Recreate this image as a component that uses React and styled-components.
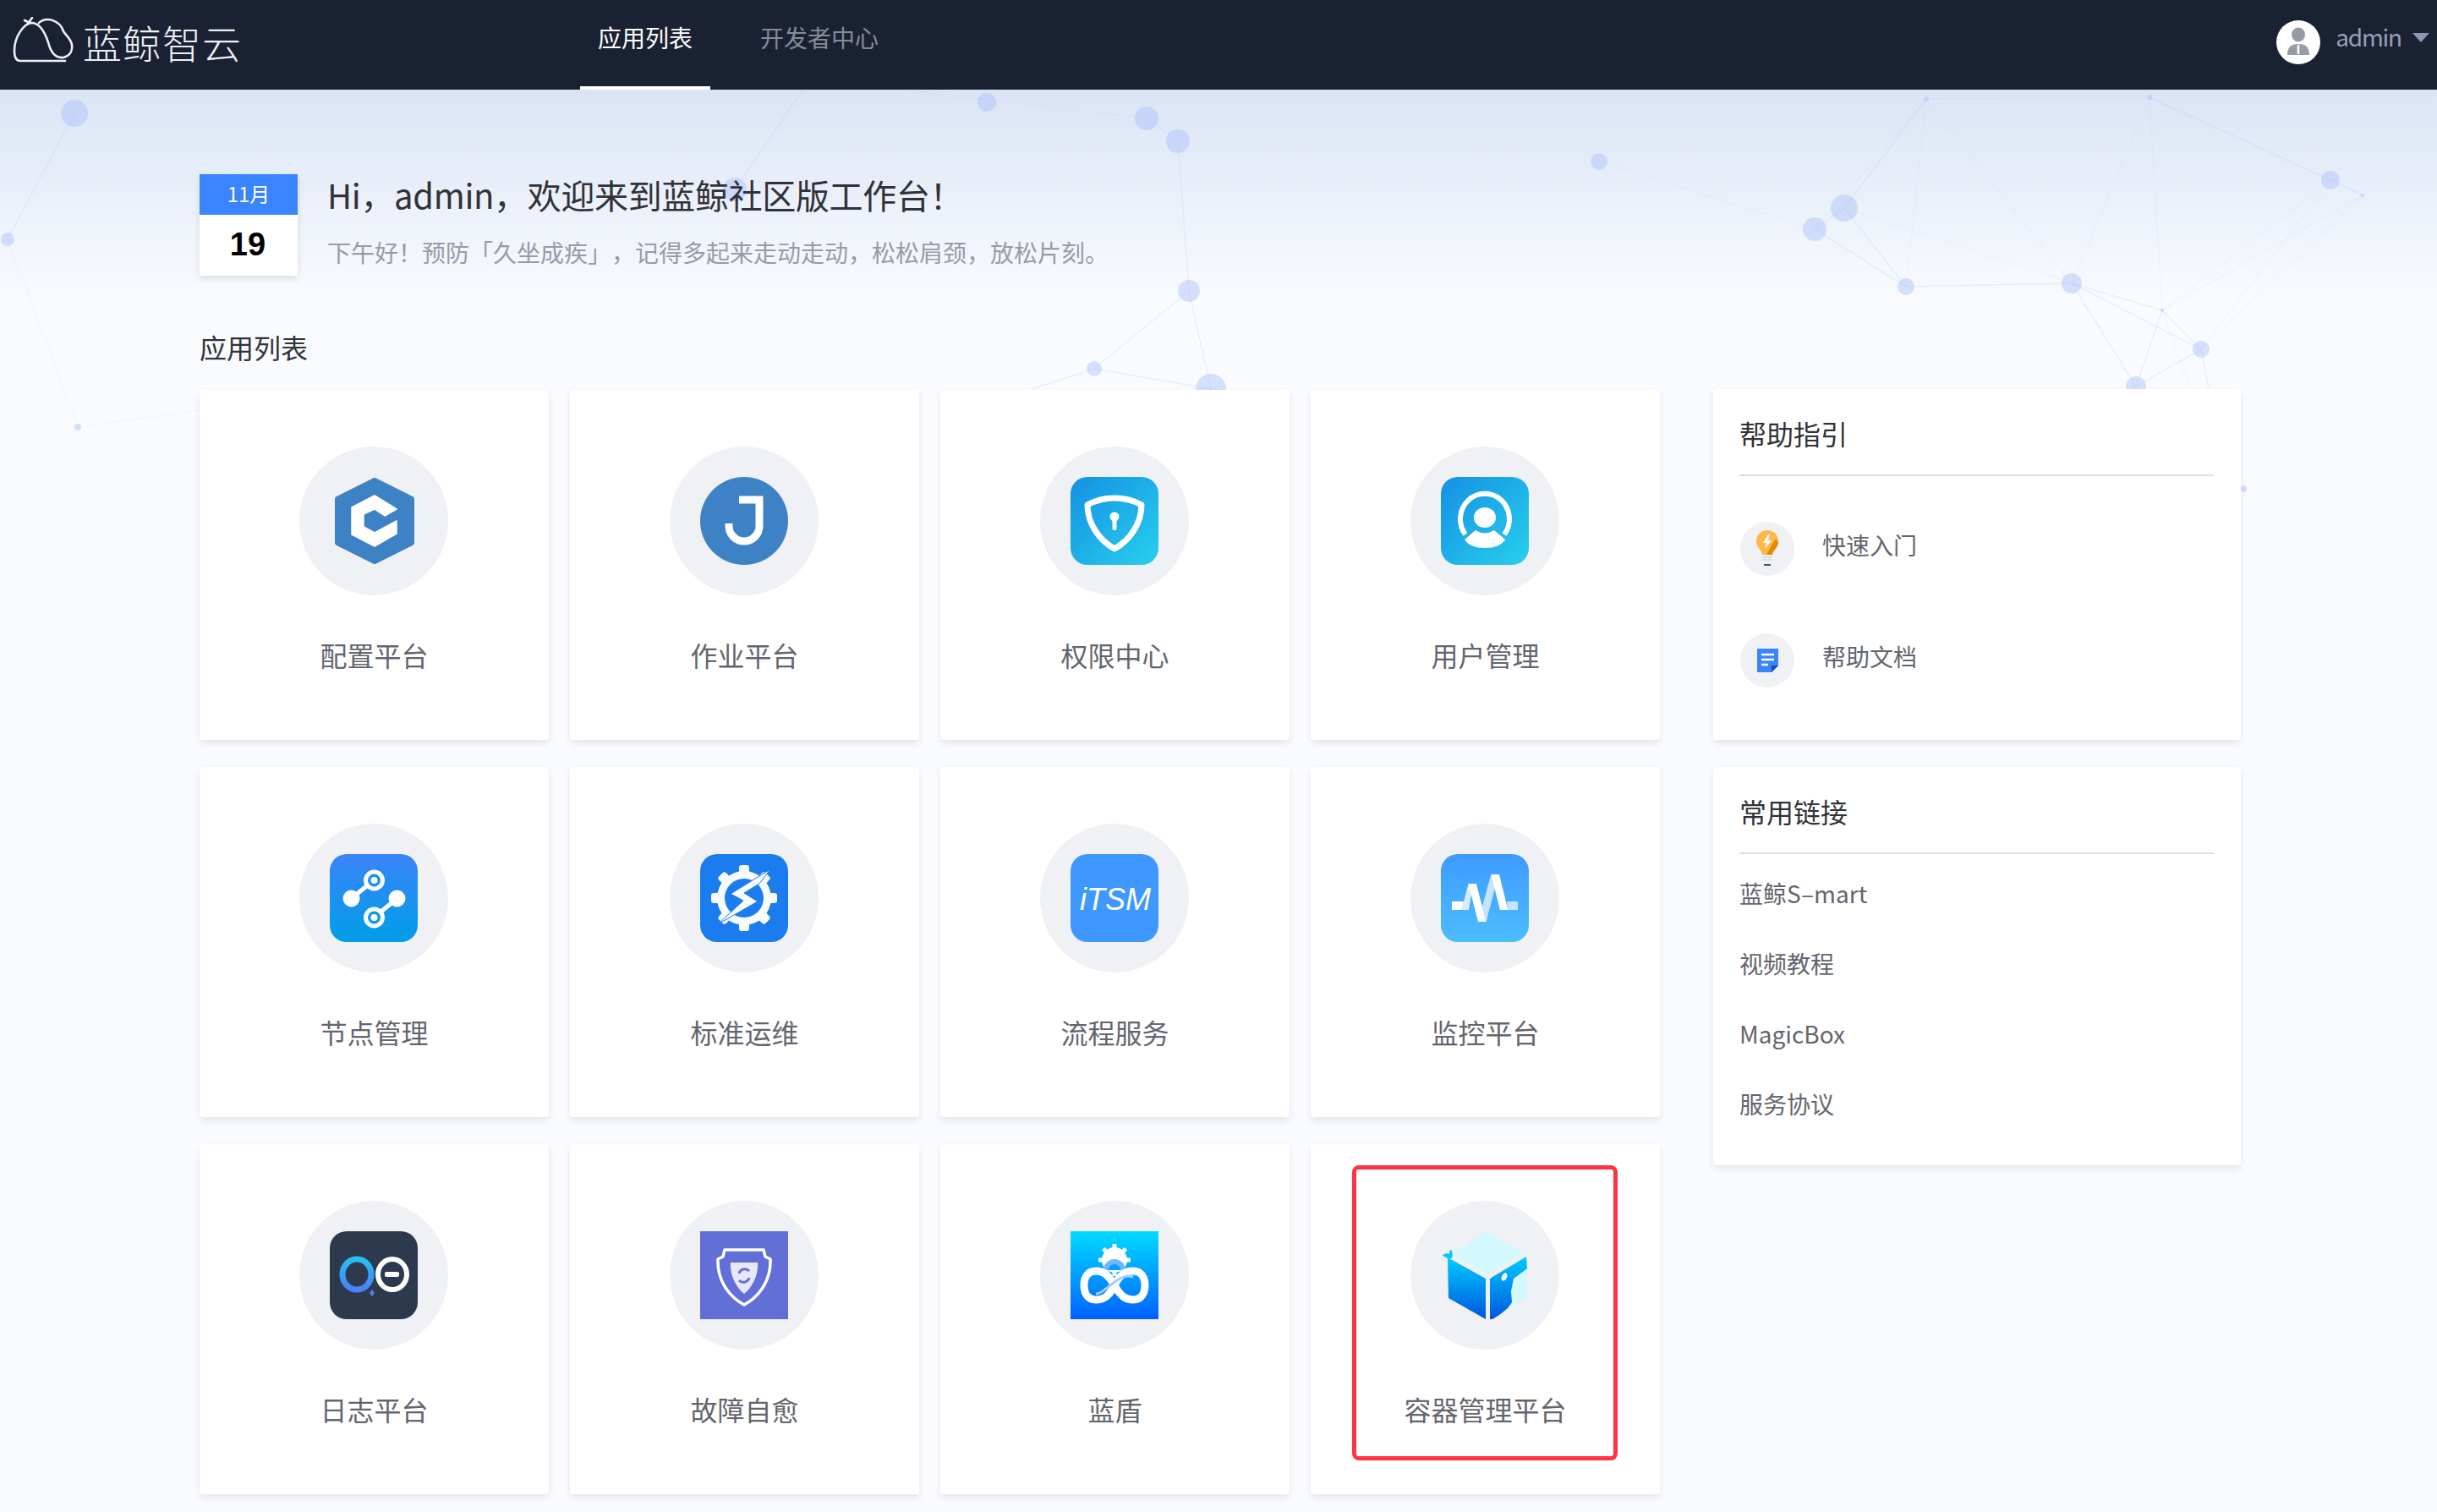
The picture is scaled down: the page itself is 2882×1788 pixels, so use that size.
import styled, { createGlobalStyle } from "styled-components";

const GlobalStyle = createGlobalStyle`
  html, body {
    margin: 0;
    padding: 0;
    background: #f9fafd;
  }
  body {
    font-family: "Noto Sans CJK SC", "Noto Sans", sans-serif;
    text-spacing-trim: space-all;
    overflow: hidden;
  }
  * {
    box-sizing: border-box;
  }
`;

const Page = styled.div`
  width: 2882px;
  height: 1788px;
  overflow: hidden;
`;

const Header = styled.header`
  height: 106px;
  background: #1a2133;
  display: flex;
  align-items: flex-start;
  padding: 0 9px 0 15px;
`;

const Logo = styled.div`
  width: 671px;
  height: 106px;
  display: flex;
  align-items: flex-start;
  padding-top: 20px;
  gap: 11px;
`;

const LogoText = styled.span`
  color: #eef0f4;
  font-size: 46px;
  line-height: 58px;
  font-weight: 300;
  letter-spacing: 1px;
`;

const Nav = styled.nav`
  display: flex;
  gap: 38px;
  flex: 1;
`;

const NavItem = styled.a`
  height: 106px;
  padding: 0 21px;
  line-height: 88px;
  font-size: 28px;
  color: ${({ $active }) => ($active ? "#fff" : "#868b98")};
  border-bottom: 4px solid ${({ $active }) => ($active ? "#fff" : "transparent")};
`;

const User = styled.div`
  display: flex;
  align-items: flex-start;
  padding-top: 24px;
`;

const Avatar = styled.div`
  width: 52px;
  height: 52px;
  border-radius: 50%;
  background: #fff;
  margin-right: 18px;
`;

const UserName = styled.span`
  font-size: 28px;
  line-height: 38px;
  letter-spacing: -1.2px;
  color: #96a0b8;
`;

const Caret = styled.i`
  width: 0;
  height: 0;
  margin: 15px 0 0 13px;
  border-left: 10px solid transparent;
  border-right: 10px solid transparent;
  border-top: 11px solid #8c96ae;
`;

const Main = styled.main`
  position: relative;
  height: 1682px;
  padding: 100px 0 0 236px;
  background: linear-gradient(#dbe4f5 0, #f9fbfe 250px);
`;

const NetworkLayer = styled.svg`
  position: absolute;
  left: 0;
  top: -106px;
  z-index: 0;
`;

const Greeting = styled.section`
  position: relative;
  z-index: 1;
  display: flex;
  gap: 35px;
`;

const DateBox = styled.div`
  width: 116px;
  height: 120px;
  background: #fff;
  box-shadow: 0 4px 8px rgba(0, 0, 0, 0.1);
  text-align: center;
`;

const DateMonth = styled.div`
  height: 48px;
  line-height: 46px;
  background: #3a84ff;
  color: #fff;
  font-size: 24px;
`;

const DateDay = styled.div`
  height: 72px;
  line-height: 70px;
  color: #000;
  font-family: "Liberation Sans", sans-serif;
  font-size: 38px;
  font-weight: 700;
  padding-right: 2px;
`;

const GreetingTitle = styled.h1`
  margin: 0;
  font-size: 40px;
  line-height: 48px;
  font-weight: 400;
  letter-spacing: -0.35px;
  color: #313238;
`;

const GreetingSub = styled.p`
  margin: 24px 0 0;
  font-size: 28px;
  line-height: 40px;
  color: #979ba5;
`;

const Content = styled.div`
  position: relative;
  z-index: 1;
  display: flex;
  gap: 63px;
  margin-top: 64px;
`;

const AppColumn = styled.div`
  width: 1727px;
`;

const SectionTitle = styled.h2`
  margin: 0 0 31px;
  font-size: 32px;
  line-height: 40px;
  font-weight: 400;
  color: #313238;
`;

const AppGrid = styled.div`
  display: grid;
  grid-template-columns: repeat(4, 1fr);
  grid-auto-rows: 414px;
  column-gap: 25px;
  row-gap: 32px;
`;

const AppCard = styled.div`
  position: relative;
  background: #fff;
  border-radius: 4px;
  box-shadow: 0 4px 8px rgba(0, 0, 0, 0.09);
  padding-top: 67px;
  display: flex;
  flex-direction: column;
  align-items: center;
`;

const HighlightFrame = styled.div`
  position: absolute;
  left: 49px;
  top: 25px;
  width: 314px;
  height: 349px;
  border: 5px solid #ff3344;
  border-radius: 8px;
`;

const IconCircle = styled.div`
  width: 176px;
  height: 176px;
  margin-right: 2px;
  border-radius: 50%;
  background: #f0f1f5;
  display: flex;
  align-items: center;
  justify-content: center;
`;

const AppName = styled.div`
  margin-top: 48px;
  font-size: 32px;
  line-height: 44px;
  color: #63656e;
`;

const SideColumn = styled.aside`
  width: 624px;
  padding-top: 70px;
  display: flex;
  flex-direction: column;
  gap: 32px;
`;

const Panel = styled.div`
  background: #fff;
  border-radius: 4px;
  box-shadow: 0 4px 8px rgba(0, 0, 0, 0.09);
  padding: 32px 32px ${({ $bottom }) => $bottom}px;
`;

const PanelTitle = styled.h3`
  margin: 0 0 0 -1px;
  padding-bottom: 29px;
  border-bottom: 2px solid #dcdee5;
  font-size: 32px;
  line-height: 40px;
  font-weight: 400;
  color: #313238;
`;

const HelpList = styled.div`
  margin-top: 54px;
  display: flex;
  flex-direction: column;
  gap: 68px;
`;

const HelpItem = styled.div`
  display: flex;
  align-items: center;
  gap: 33px;
  font-size: 28px;
  line-height: 40px;
  color: #63656e;

  span {
    margin-bottom: 10px;
  }
`;

const HelpIcon = styled.div`
  width: 64px;
  height: 64px;
  border-radius: 50%;
  background: #f0f1f5;
`;

const LinkList = styled.div`
  margin-top: 26px;
  display: flex;
  flex-direction: column;
  gap: 43px;
`;

const LinkItem = styled.a`
  margin-left: -1px;
  font-size: 28px;
  line-height: 40px;
  color: #63656e;
`;

const Tile = ({ id, from, to, diagonal, radius = 20, children }) => (
  <svg width="104" height="104" viewBox="0 0 104 104">
    <defs>
      <linearGradient id={id} x1="0" y1="0" x2={diagonal ? "1" : "0"} y2="1">
        <stop offset="0" stopColor={from} />
        <stop offset="1" stopColor={to} />
      </linearGradient>
    </defs>
    <rect width="104" height="104" rx={radius} fill={`url(#${id})`} />
    {children}
  </svg>
);

const ConfigIcon = () => (
  <svg width="104" height="104" viewBox="0 0 104 104">
    <polygon points="53,4 97,26 97,78 53,100 9,78 9,26" fill="#3d82c4" stroke="#3d82c4" strokeWidth="6" strokeLinejoin="round" />
    <polygon points="53,22 79,38 65,46 53,38 40,44 40,59 53,66 79,52 79,67 53,82 26,68 26,36" fill="#fff" stroke="#fff" strokeWidth="1.5" strokeLinejoin="round" />
  </svg>
);

const JobIcon = () => (
  <svg width="104" height="104" viewBox="0 0 104 104">
    <circle cx="52" cy="52" r="52" fill="#3d82c4" />
    <path d="M46 27H70V58A18 18 0 0 1 34 58V55" fill="none" stroke="#fff" strokeWidth="9" />
  </svg>
);

const AuthIcon = () => (
  <Tile id="auth" from="#1490e4" to="#28d0ec" diagonal>
    <path d="M52 25C62 25 75 28 84 33C84 55 70 75 52 85C34 75 20 55 20 33C29 28 42 25 52 25Z" fill="none" stroke="#fff" strokeWidth="7" strokeLinejoin="round" />
    <circle cx="52" cy="47" r="5.5" fill="#fff" />
    <rect x="49.5" y="49" width="5" height="14" rx="2" fill="#fff" />
  </Tile>
);

const UserIcon = () => (
  <Tile id="user" from="#1490e4" to="#28d0ec" diagonal>
    <path d="M29 68A29 30 0 1 1 75 68" fill="none" stroke="#fff" strokeWidth="6" />
    <ellipse cx="52" cy="48" rx="13" ry="12" fill="#fff" />
    <path d="M41 63Q52 70 63 63L76 74Q70 84 52 84Q34 84 28 74Z" fill="#fff" />
  </Tile>
);

const NodeIcon = () => (
  <Tile id="node" from="#3a84f8" to="#009ee8">
    <path d="M25 53L52 31M79 53L52 75" stroke="#fff" strokeWidth="5" />
    <circle cx="25.5" cy="52.5" r="10" fill="#fff" />
    <circle cx="79.5" cy="52.5" r="10" fill="#fff" />
    <circle cx="52.5" cy="31" r="10" fill="#1c92ee" stroke="#fff" strokeWidth="5" />
    <circle cx="52.5" cy="31" r="4" fill="#fff" />
    <circle cx="52.5" cy="75" r="10" fill="#0d9ae9" stroke="#fff" strokeWidth="5" />
    <circle cx="52.5" cy="75" r="4" fill="#fff" />
  </Tile>
);

const JobStandardIcon = () => (
  <Tile id="std" from="#1b7cee" to="#1b7cee">
    <g fill="#f7fafe">
      <circle cx="52" cy="52" r="32" />
      {[0, 45, 90, 135].map((angle) => (
        <rect key={angle} x="46" y="13" width="12" height="78" rx="3" transform={`rotate(${angle} 52 52)`} />
      ))}
    </g>
    <circle cx="52" cy="52" r="23" fill="#1b7cee" />
    <polygon points="83,18 36,47 51,55 21,83 68,56 52,46 70,35" fill="#f7fafe" stroke="#1b7cee" strokeWidth="1" />
  </Tile>
);

const ItsmIcon = () => (
  <Tile id="itsm" from="#3e98ff" to="#3e98ff">
    <text x="11" y="66" fill="#fff" fontFamily="'Liberation Sans', sans-serif" fontStyle="italic" fontWeight="400" fontSize="36" textLength="84" lengthAdjust="spacingAndGlyphs">
      iTSM
    </text>
  </Tile>
);

const MonitorIcon = () => (
  <Tile id="monitor" from="#3f9bff" to="#4cbdff">
    <polygon points="24.5,66 32.5,35 38,35 33,66" fill="#d8ecff" />
    <polygon points="49,62 59.3,24 64,40 53.6,80" fill="#c6e4ff" />
    <polygon points="78,56 91,56 91,66 79,66" fill="#c6e4ff" />
    <polygon points="13,56 27,56 24.5,66 13,66" fill="#fff" />
    <polygon points="32.5,35 41.8,35 53.6,80 44,80" fill="#fff" />
    <polygon points="59.3,24 69,24 79.3,66 70,66" fill="#fff" />
  </Tile>
);

const LogIcon = () => (
  <Tile id="log" from="#2d3a4e" to="#2d3a4e">
    <defs>
      <linearGradient id="logRing" x1="0" y1="0" x2="0" y2="1">
        <stop offset="0" stopColor="#24c1f0" />
        <stop offset="1" stopColor="#4a80f8" />
      </linearGradient>
    </defs>
    <ellipse cx="32" cy="51" rx="17" ry="18" fill="none" stroke="url(#logRing)" strokeWidth="7" />
    <polygon points="50,69 53,73 50,77 47,73" fill="#4a80f8" />
    <ellipse cx="74" cy="51" rx="17" ry="18" fill="none" stroke="#fff" strokeWidth="6" />
    <rect x="65" y="48" width="17" height="6" rx="2" fill="#fff" />
  </Tile>
);

const HealIcon = () => (
  <Tile id="heal" from="#626fd6" to="#626fd6" radius={0}>
    <path d="M29 22H75L77 30L83 33C84 56 72 76 52 87C32 76 20 56 21 33L27 30Z" fill="none" stroke="#fff" strokeWidth="3.5" strokeLinejoin="round" />
    <path d="M36 37H68C69 52 62 66 52 74C42 66 35 52 36 37Z" fill="#e6e7f9" />
    <path d="M46 50A7 7 0 0 1 58 47M58 55A7 7 0 0 1 46 58" fill="none" stroke="#626fd6" strokeWidth="3" />
  </Tile>
);

const ShieldIcon = () => (
  <Tile id="shield" from="#00dcff" to="#0060ff" radius={0}>
    <g fill="#fff">
      <circle cx="52" cy="34" r="15" />
      {[0, 45, 90, 135].map((angle) => (
        <rect key={angle} x="49.5" y="15" width="5" height="38" rx="1" transform={`rotate(${angle} 52 34)`} />
      ))}
    </g>
    <path d="M39 46A13 13 0 0 1 65 46Z" fill="#6cb8ff" />
    <path d="M45 46A7 7 0 0 1 59 46Z" fill="#0a9cff" />
    <path d="M52 64C44 50 38 47 30 47C20 47 16 55 16 64C16 73 20 81 30 81C40 81 46 76 52 64C58 52 64 47 74 47C84 47 88 55 88 64C88 73 84 81 74 81C66 81 60 78 52 64Z" fill="none" stroke="#fff" strokeWidth="9" />
    <path d="M30 74C42 74 56 48 74 54" fill="none" stroke="#a9cdff" strokeWidth="3" />
  </Tile>
);

const ContainerIcon = () => (
  <svg width="104" height="104" viewBox="0 0 104 104">
    <defs>
      <linearGradient id="cube" x1="0" y1="0" x2="0" y2="1">
        <stop offset="0" stopColor="#00ccff" />
        <stop offset="1" stopColor="#0055dd" />
      </linearGradient>
    </defs>
    <polygon points="54,0 98,26 54,51 13,27" fill="#d3f9ff" />
    <polygon points="58,56 101,30 102,79 58,104" fill="#d3f9ff" />
    <polygon points="8,31 53,56 53,104 9,79" fill="url(#cube)" />
    <polygon points="58,56 101,30 102,44 86,56 83,71 84,84 79,91 69,99 61,104 58,104" fill="url(#cube)" />
    <ellipse cx="75" cy="54" rx="3" ry="5" transform="rotate(25 75 54)" fill="#fff" />
    <path d="M8 32C4 30 2 29 2 28C6 26 8 26 10 27C10 24 11 21 12 22C14 24 14 28 13 32Z" fill="#00c8ff" />
  </svg>
);

const BulbIcon = () => (
  <svg width="64" height="64" viewBox="0 0 64 64">
    <path d="M19 23A13 13 0 0 1 45 23C45 31 38 34 38 39H26C26 34 19 31 19 23Z" fill="#ffb848" />
    <path d="M45 24C45 31 38 34 38 39H31L38 26L42 20Z" fill="#e58a00" />
    <path d="M33 15L27 25H31L29 32L37 22H33L35 15Z" fill="#fff" />
    <path d="M26 42H38M26 45H38" stroke="#d9dee4" strokeWidth="2" />
    <path d="M28 51H36" stroke="#4a5160" strokeWidth="2" />
  </svg>
);

const DocIcon = () => (
  <svg width="64" height="64" viewBox="0 0 64 64">
    <path d="M20 18H45V38L37 46H20Z" fill="#3a84ff" />
    <path d="M45 38L37 46V38Z" fill="#1c4fb0" />
    <path d="M25 25H40M25 31H40M25 37H33" stroke="#fff" strokeWidth="2.5" />
  </svg>
);

const CloudLogo = () => (
  <svg width="72" height="56" viewBox="0 0 72 56" fill="none" stroke="#eef0f4" strokeWidth="2.6" strokeLinecap="round">
    <path d="M62 52H9C3 52 2 46 2 40C2 22 14 8 22 7C32 7 38 18 42 30C45 42 50 49 60 48C68 46 71 40 70 33C69 26 63 22 60 17C56 4 40 -1 31 7" />
    <path d="M18 8L23 1M14 4L20 7" />
  </svg>
);

const AvatarIcon = () => (
  <svg width="52" height="52" viewBox="0 0 52 52">
    <ellipse cx="26" cy="17" rx="8" ry="8.5" fill="#979ba5" />
    <path d="M13 41C13 31 18 28 26 28C34 28 39 31 39 41Z" fill="#979ba5" />
    <path d="M26 29V40" stroke="#fff" strokeWidth="2.5" />
  </svg>
);

const NODES = [
  [88, 134, 16], [9, 283, 8], [92, 505, 4], [869, 224, 14], [1167, 121, 11], [1356, 140, 14],
  [1393, 167, 14], [1891, 191, 10], [1406, 344, 13], [1294, 436, 9], [1432, 460, 18],
  [2278, 117, 3], [2542, 115, 3], [2756, 213, 11], [2794, 231, 2], [2181, 246, 16], [2146, 271, 14],
  [2254, 339, 10], [2450, 335, 12], [2557, 367, 2], [2603, 413, 10], [2526, 457, 12], [2653, 578, 4],
];

const LINKS = [
  [88, 134, 9, 283], [869, 224, 950, 106], [1356, 140, 1393, 167], [1393, 167, 1406, 344],
  [1406, 344, 1294, 436], [1406, 344, 1432, 460], [1294, 436, 1432, 460], [1294, 436, 1220, 460],
  [2278, 117, 2181, 246], [2542, 115, 2756, 213], [2756, 213, 2794, 231], [2181, 246, 2146, 271],
  [2181, 246, 2254, 339], [2146, 271, 2254, 339], [2254, 339, 2450, 335], [2450, 335, 2557, 367],
  [2450, 335, 2603, 413], [2450, 335, 2526, 457], [2557, 367, 2603, 413], [2557, 367, 2526, 457],
  [2603, 413, 2526, 457], [2603, 413, 2612, 460],
];

const FAINT_LINKS = [
  [9, 283, 92, 505], [92, 505, 236, 485], [1066, 106, 1356, 140], [2278, 117, 2542, 115],
  [2278, 117, 2146, 271], [2278, 117, 2254, 339], [2278, 117, 2450, 335], [2542, 115, 2450, 335],
  [2542, 115, 2557, 367], [2756, 213, 2557, 367], [2756, 213, 2603, 413], [2794, 231, 2603, 413],
  [2794, 231, 2557, 367], [2557, 367, 2590, 460], [1891, 191, 2146, 271], [2181, 246, 2450, 335],
];

const Network = () => (
  <NetworkLayer width="2882" height="600" viewBox="0 0 2882 600">
    {LINKS.map(([x1, y1, x2, y2]) => (
      <line key={`${x1}-${y1}-${x2}-${y2}`} x1={x1} y1={y1} x2={x2} y2={y2} stroke="#a8bdfb" strokeOpacity="0.2" strokeWidth="1.5" />
    ))}
    {FAINT_LINKS.map(([x1, y1, x2, y2]) => (
      <line key={`${x1}-${y1}-${x2}-${y2}`} x1={x1} y1={y1} x2={x2} y2={y2} stroke="#a8bdfb" strokeOpacity="0.08" strokeWidth="1.5" />
    ))}
    {NODES.map(([cx, cy, r]) => (
      <circle key={`${cx}-${cy}`} cx={cx} cy={cy} r={r} fill="#a9bffb" fillOpacity="0.45" />
    ))}
  </NetworkLayer>
);

const APPS = [
  { name: "配置平台", Icon: ConfigIcon },
  { name: "作业平台", Icon: JobIcon },
  { name: "权限中心", Icon: AuthIcon },
  { name: "用户管理", Icon: UserIcon },
  { name: "节点管理", Icon: NodeIcon },
  { name: "标准运维", Icon: JobStandardIcon },
  { name: "流程服务", Icon: ItsmIcon },
  { name: "监控平台", Icon: MonitorIcon },
  { name: "日志平台", Icon: LogIcon },
  { name: "故障自愈", Icon: HealIcon },
  { name: "蓝盾", Icon: ShieldIcon },
  { name: "容器管理平台", Icon: ContainerIcon, marked: true },
];

const COMMON_LINKS = ["蓝鲸S–mart", "视频教程", "MagicBox", "服务协议"];

const App = () => {
  return (
    <Page>
      <GlobalStyle />
      <Header>
        <Logo>
          <CloudLogo />
          <LogoText>蓝鲸智云</LogoText>
        </Logo>
        <Nav>
          <NavItem $active>应用列表</NavItem>
          <NavItem>开发者中心</NavItem>
        </Nav>
        <User>
          <Avatar>
            <AvatarIcon />
          </Avatar>
          <UserName>admin</UserName>
          <Caret />
        </User>
      </Header>
      <Main>
        <Network />
        <Greeting>
          <DateBox>
            <DateMonth>11月</DateMonth>
            <DateDay>19</DateDay>
          </DateBox>
          <div>
            <GreetingTitle>Hi，admin，欢迎来到蓝鲸社区版工作台！</GreetingTitle>
            <GreetingSub>下午好！预防「久坐成疾」，记得多起来走动走动，松松肩颈，放松片刻。</GreetingSub>
          </div>
        </Greeting>
        <Content>
          <AppColumn>
            <SectionTitle>应用列表</SectionTitle>
            <AppGrid>
              {APPS.map(({ name, Icon, marked }) => (
                <AppCard key={name}>
                  <IconCircle>
                    <Icon />
                  </IconCircle>
                  <AppName>{name}</AppName>
                  {marked && <HighlightFrame />}
                </AppCard>
              ))}
            </AppGrid>
          </AppColumn>
          <SideColumn>
            <Panel $bottom={62}>
              <PanelTitle>帮助指引</PanelTitle>
              <HelpList>
                <HelpItem>
                  <HelpIcon>
                    <BulbIcon />
                  </HelpIcon>
                  <span>快速入门</span>
                </HelpItem>
                <HelpItem>
                  <HelpIcon>
                    <DocIcon />
                  </HelpIcon>
                  <span>帮助文档</span>
                </HelpItem>
              </HelpList>
            </Panel>
            <Panel $bottom={53}>
              <PanelTitle>常用链接</PanelTitle>
              <LinkList>
                {COMMON_LINKS.map((link) => (
                  <LinkItem key={link}>{link}</LinkItem>
                ))}
              </LinkList>
            </Panel>
          </SideColumn>
        </Content>
      </Main>
    </Page>
  );
};

export default App;
